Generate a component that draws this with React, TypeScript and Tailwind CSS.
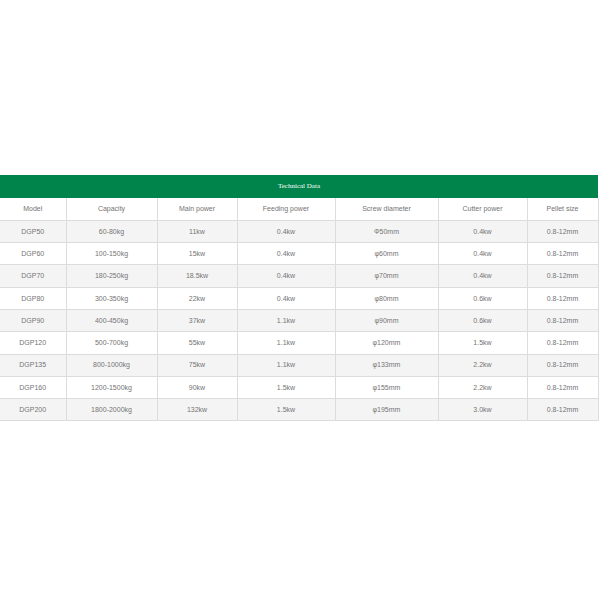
const columns = [
  { label: "Model", w: "w-[66px]" },
  { label: "Capacity", w: "w-[91px]" },
  { label: "Main power", w: "w-[80px]" },
  { label: "Feeding power", w: "w-[98px]" },
  { label: "Screw diameter", w: "w-[103px]" },
  { label: "Cutter power", w: "w-[89px]" },
  { label: "Pellet size", w: "w-[71px]" },
];

const rows = [
  ["DGP50", "60-80kg", "11kw", "0.4kw", "Φ50mm", "0.4kw", "0.8-12mm"],
  ["DGP60", "100-150kg", "15kw", "0.4kw", "φ60mm", "0.4kw", "0.8-12mm"],
  ["DGP70", "180-250kg", "18.5kw", "0.4kw", "φ70mm", "0.4kw", "0.8-12mm"],
  ["DGP80", "300-350kg", "22kw", "0.4kw", "φ80mm", "0.6kw", "0.8-12mm"],
  ["DGP90", "400-450kg", "37kw", "1.1kw", "φ90mm", "0.6kw", "0.8-12mm"],
  ["DGP120", "500-700kg", "55kw", "1.1kw", "φ120mm", "1.5kw", "0.8-12mm"],
  ["DGP135", "800-1000kg", "75kw", "1.1kw", "φ133mm", "2.2kw", "0.8-12mm"],
  ["DGP160", "1200-1500kg", "90kw", "1.5kw", "φ155mm", "2.2kw", "0.8-12mm"],
  ["DGP200", "1800-2000kg", "132kw", "1.5kw", "φ195mm", "3.0kw", "0.8-12mm"],
];

export default function App() {
  return (
    <div className="h-[600px] w-[600px] bg-white pt-[175px]">
      <div className="w-[598px]">
        <div className="flex h-[23px] items-center justify-center bg-[#00844c] text-[7px] text-white [font-family:'Liberation_Serif',serif]">
          Technical Data
        </div>
        <table className="w-[598px] table-fixed border-collapse text-[7px] text-[#747474] [font-family:'Liberation_Sans',Arial,sans-serif]">
          <thead>
            <tr className="h-[22.3px] bg-white">
              {columns.map((c, i) => (
                <th
                  key={c.label}
                  className={`${c.w} border-b border-[#dcdcdc] p-0 pt-px text-center font-normal ${i > 0 ? "border-l" : ""} ${i === columns.length - 1 ? "border-r" : ""}`}
                >
                  {c.label}
                </th>
              ))}
            </tr>
          </thead>
          <tbody>
            {rows.map((r, ri) => (
              <tr key={r[0]} className={`h-[22.3px] ${ri % 2 === 0 ? "bg-[#f4f4f4]" : "bg-white"}`}>
                {r.map((v, ci) => (
                  <td
                    key={ci}
                    className={`border-b border-[#dcdcdc] p-0 pt-px text-center ${ci > 0 ? "border-l" : ""} ${ci === r.length - 1 ? "border-r" : ""}`}
                  >
                    {v}
                  </td>
                ))}
              </tr>
            ))}
          </tbody>
        </table>
      </div>
    </div>
  );
}
